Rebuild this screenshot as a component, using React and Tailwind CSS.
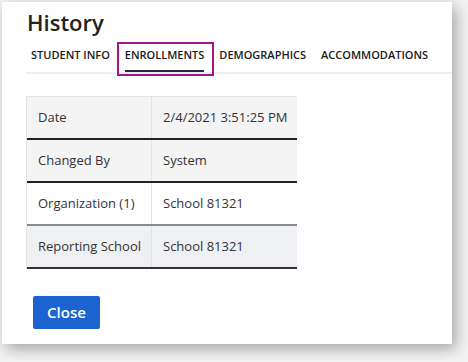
const tabs = ["Student Info", "Enrollments", "Demographics", "Accommodations"]

const rows = [
  { label: "Date", value: "2/4/2021 3:51:25 PM", bg: "bg-[#f4f4f4]", border: "border-[#222]" },
  { label: "Changed By", value: "System", bg: "bg-[#f4f4f4]", border: "border-[#222]" },
  { label: "Organization (1)", value: "School 81321", bg: "bg-white", border: "border-[#8a8a8a]" },
  { label: "Reporting School", value: "School 81321", bg: "bg-[#eef0f4]", border: "border-[#333]" },
]

const App = () => {
  return (
    <div
      className="w-[468px] h-[362px] bg-[#f3f3f3] pt-[2px] pl-[2px] overflow-hidden"
      style={{ fontFamily: '"Open Sans", "Liberation Sans", sans-serif' }}
    >
      <div className="w-[450px] h-[342px] bg-white shadow-[4px_5px_14px_rgba(0,0,0,0.32)] pt-[5px] pl-[24px] flex flex-col">
        <h1 className="text-[22px] leading-[30px] font-semibold text-[#222] pl-[1px]">History</h1>

        <div className="mt-[4px] flex gap-[15px] border-b-2 border-[#efefef] pl-[5px] h-[33px]">
          {tabs.map((t) => {
            const active = t === "Enrollments"
            return (
              <div key={t} className="relative flex flex-col">
                <span className="text-[11px] leading-[16px] font-semibold uppercase text-[#1a1a1a] mt-[6px]">
                  {t}
                </span>
                {active && (
                  <>
                    <div className="mt-[7px] h-[2px] bg-[#1f2a44]" />
                    <div className="absolute -left-[8px] -right-[10px] top-[1px] h-[34px] border-2 border-[#a3158c]" />
                  </>
                )}
              </div>
            )
          })}
        </div>

        <div className="mt-[22px] w-[271px] border-t border-l border-[#e4e4e4] text-[13px] text-[#333]">
          {rows.map((r) => (
            <div key={r.label} className={`flex h-[43px] border-b-2 ${r.border} ${r.bg}`}>
              <div className="w-[125px] border-r border-[#e2e2e2] pl-[11px] flex items-center">{r.label}</div>
              <div className="flex-1 pl-[11px] flex items-center">{r.value}</div>
            </div>
          ))}
        </div>

        <button className="mt-[27px] ml-[7px] w-[67px] h-[33px] bg-[#1b64cf] rounded-[2px] text-white text-[15px] font-semibold">
          Close
        </button>
      </div>
    </div>
  )
}

export default App
